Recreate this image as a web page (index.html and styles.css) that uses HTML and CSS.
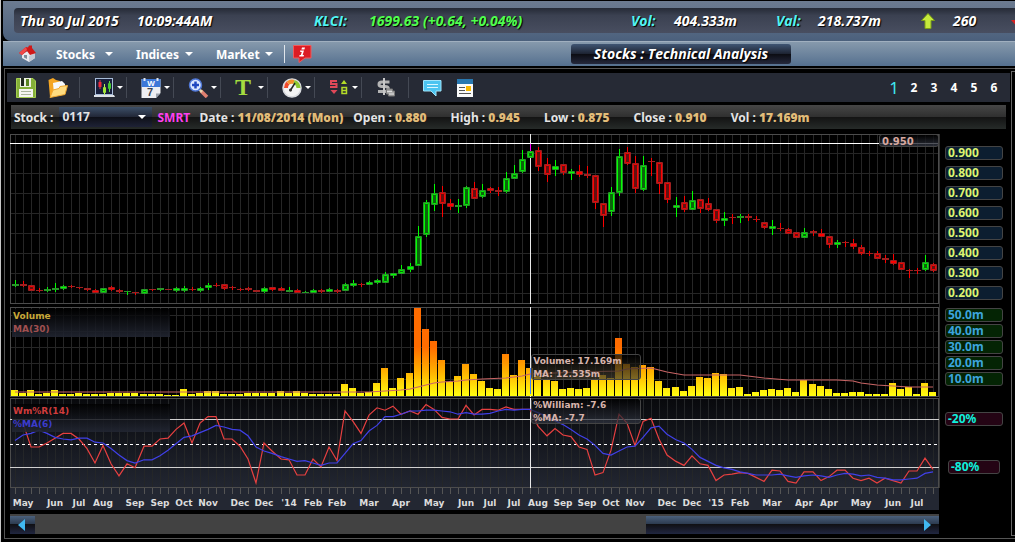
FILE: index.html
```html
<!DOCTYPE html>
<html lang="en">
<head>
    <meta charset="UTF-8">
    <meta name="viewport" content="width=device-width, initial-scale=1.0">
    <title>Stocks : Technical Analysis</title>
    <link rel="stylesheet" href="styles.css">
</head>
<body>
    <header class="ticker">
        <div class="ticker-inner">
            <span>Thu 30 Jul 2015</span>
            <span>10:09:44AM</span>
            <span class="cyan">KLCI:</span>
            <span class="green">1699.63 (+0.64, +0.04%)</span>
            <span class="cyan">Vol:</span>
            <span>404.333m</span>
            <span class="cyan">Val:</span>
            <span>218.737m</span>
            <svg width="14" height="16" viewBox="0 0 14 16"><path d="M7 0.5 L13.5 7.5 H10 V15.5 H4 V7.5 H0.5 Z" fill="#c6ea3c" stroke="#7da018"/></svg>
            <span>260</span>
            <svg width="14" height="16" viewBox="0 0 14 16"><path d="M7 15 L0 7 H4 V0 H10 V7 H14 Z" fill="#d82020"/></svg>
        </div>
    </header>

    <nav class="menu">
        <a href="#" class="home" aria-label="Home">
            <svg width="18" height="18" viewBox="0 0 18 18">
                <path d="M3 9 L9 6 L16 9 V13 L10 17 L3 13 Z" fill="#e9e9ee"/>
                <path d="M10 17 V11 L16 8 V13 Z" fill="#c3c8d2"/>
                <path d="M0 8 L7 2 L9 2.5 L10 0.5 H13 V3 L17 8 L11 10 L8 6 L3 10 Z" fill="#d01818"/>
                <path d="M7 2 L0 8 L3 10 L8 5 Z" fill="#f04a4a"/>
                <path d="M5 10 h3 v4 l-3 -1.5 Z" fill="#7f8b99"/>
            </svg>
        </a>
        <button class="menu-item caret">Stocks</button>
        <button class="menu-item caret">Indices</button>
        <button class="menu-item caret">Market</button>
        <button class="info" aria-label="Information">
            <svg width="19" height="18" viewBox="0 0 19 18">
                <path d="M0.5 0.5 H18 V13 H12 L6 17.5 V13 H0.5 Z" fill="#dc1c24" stroke="#f05a5a"/>
                <path d="M9 2.5 h3 l-.6 2 h-3 Z M7 5.5 h4 l-1.4 4.5 h1.4 l-.4 1.5 h-4.4 l.4 -1.5 h1.2 l1 -3 h-1.4 Z" fill="#fff"/>
            </svg>
        </button>
        <h1 class="title">Stocks : Technical Analysis</h1>
    </nav>

    <main class="frame">
        <div class="toolbar">
            <button class="tool tool-save" aria-label="Save">
                <svg width="20" height="20" viewBox="0 0 20 20">
                    <path d="M0.5 0.5 H17 L19.5 3 V19.5 H0.5 Z" fill="#84b038" stroke="#a4cc50"/>
                    <rect x="4" y="0" width="11" height="9" fill="#eef2e4"/>
                    <rect x="5" y="0" width="3" height="8" fill="#20281c"/>
                    <rect x="10" y="1" width="3" height="7" fill="#5a8420"/>
                    <rect x="3" y="11" width="14" height="8" fill="#f4f4f0"/>
                    <path d="M5 13.5 H15 M5 16.5 H15" stroke="#a9b49a"/>
                </svg>
            </button>
            <button class="tool tool-open" aria-label="Open">
                <svg width="21" height="20" viewBox="0 0 21 20">
                    <path d="M0.5 2 L5 0 L8 2 L12 3 V16 L2 19 Z" fill="#f5a623"/>
                    <path d="M5 5 L14 3 L17 6 V14 L6 16 Z" fill="#f7f9fb"/>
                    <path d="M2 19.5 L5 12 L11 10.5 L12 8.5 L19.5 7.5 L17 16.5 Z" fill="#ffdc80" stroke="#f0a830"/>
                </svg>
            </button>
            <button class="tool drop caret" aria-label="Chart type">
                <svg width="21" height="20" viewBox="0 0 21 20">
                    <rect x="1.5" y="0.5" width="17" height="16" fill="#18203c" stroke="#a8bcd8"/>
                    <path d="M0 17 H20 L21 19 H0 Z" fill="#dde2e8"/>
                    <path d="M6 2 V11" stroke="#e83848"/>
                    <path d="M10.5 6 V17" stroke="#b8f060"/>
                    <path d="M15.5 3 V14" stroke="#60e040"/>
                    <rect x="4.5" y="4" width="3" height="5" fill="#f02838"/>
                    <rect x="9" y="9" width="3" height="6" rx="1" fill="#a4e838"/>
                    <rect x="14" y="5" width="3" height="6" rx="1" fill="#48cc30"/>
                </svg>
            </button>
            <button class="tool drop caret" aria-label="Period">
                <svg width="20" height="20" viewBox="0 0 20 20">
                    <path d="M0.5 1 H19.5 V15 L15 20 H0.5 Z" fill="#eeeff2"/>
                    <path d="M15 20 V15.5 H19.5 Z" fill="#9ba2ac"/>
                    <path d="M0.5 1 H19.5 V9 H0.5 Z" fill="#3d78d8"/>
                    <path d="M3.5 0 V3 M16.5 0 V3" stroke="#dfe6f0" stroke-width="2"/>
                    <text x="10" y="8" text-anchor="middle" class="icon-text" font-size="8" fill="#fff">W</text>
                    <text x="9" y="18" text-anchor="middle" class="icon-text" font-size="11" fill="#3a4250">7</text>
                </svg>
            </button>
            <button class="tool drop caret" aria-label="Zoom">
                <svg width="21" height="20" viewBox="0 0 21 20">
                    <path d="M13 13 L19 19" stroke="#e08070" stroke-width="3.5"/>
                    <path d="M11 11 L14 14" stroke="#e8d8b0" stroke-width="2.5"/>
                    <circle cx="7.5" cy="7" r="6" fill="#dce8ff" stroke="#5078d8" stroke-width="1.5"/>
                    <path d="M7.5 3.5 V10.5 M4 7 H11" stroke="#2048c0" stroke-width="2.5"/>
                </svg>
            </button>
            <button class="tool drop caret text-tool" aria-label="Text">T</button>
            <button class="tool drop caret" aria-label="Indicators">
                <svg width="20" height="20" viewBox="0 0 20 20">
                    <circle cx="10" cy="10" r="9" fill="#f4f4f4" stroke="#d8dade" stroke-width="1.5"/>
                    <path d="M4 10 A6.5 6.5 0 0 1 6 5" fill="none" stroke="#f04c2c" stroke-width="4"/>
                    <path d="M6 5 A6.5 6.5 0 0 1 12 4" fill="none" stroke="#f2902c" stroke-width="4"/>
                    <path d="M12 4 A6.5 6.5 0 0 1 16.5 10" fill="none" stroke="#8cc832" stroke-width="4"/>
                    <path d="M8 13 L13 5" stroke="#222" stroke-width="1.5"/>
                    <circle cx="8.5" cy="12" r="1.5" fill="#333"/>
                </svg>
            </button>
            <button class="tool drop caret" aria-label="Sell and buy signals">
                <svg width="20" height="19" viewBox="0 0 20 19">
                    <path d="M8 3 H2 V6 H7.5 V9 H1" fill="none" stroke="#e04858" stroke-width="2"/>
                    <path d="M1.5 12 H8.5 L5 16 Z" fill="#e04858"/>
                    <path d="M12 6 H18 L15 2 Z" fill="#b4dc28"/>
                    <path d="M13 9.5 H17.5 V15.5 H13 Z M13 12.5 H17.5" fill="none" stroke="#b4dc28" stroke-width="1.5"/>
                </svg>
            </button>
            <button class="tool drop" aria-label="Price">
                <svg width="20" height="20" viewBox="0 0 20 20">
                    <path d="M13.5 4 H6 C2 4 2 8.5 6 8.5 H9 C13.5 8.5 13.5 13.5 9 13.5 H2" fill="none" stroke="#b4b4b4" stroke-width="3"/>
                    <path d="M8 0 V17" stroke="#c8c8c8" stroke-width="2"/>
                    <path d="M10.5 11 h6 v2 h2 v5 h-6 v-2 h-2 Z" fill="#a8a8a8" stroke="#777"/>
                    <path d="M11 13.5 h5 M13 16 h5" stroke="#ddd"/>
                </svg>
            </button>
            <button class="tool drop" aria-label="Comments">
                <svg width="20" height="18" viewBox="0 0 20 18">
                    <path d="M0.5 1.5 H18 V12 H13 V17 L8 12 H0.5 Z" fill="#4cc4f0" stroke="#9fe4fb"/>
                    <path d="M4 5.5 H15 M4 8.5 H15" stroke="#d8f6ff"/>
                </svg>
            </button>
            <button class="tool tool-news" aria-label="News">
                <svg width="16" height="18" viewBox="0 0 16 18">
                    <rect width="16" height="18" fill="#fafafa"/>
                    <rect width="16" height="5" fill="#2878b0"/>
                    <path d="M2 8.5 H8 M2 11.5 H8 M2 14.5 H14" stroke="#555"/>
                    <rect x="9" y="7" width="5" height="5" fill="#f8b800"/>
                </svg>
            </button>
            <div class="pages">
                <button class="page active">1</button>
                <button class="page">2</button>
                <button class="page">3</button>
                <button class="page">4</button>
                <button class="page">5</button>
                <button class="page">6</button>
            </div>
        </div>

        <div class="quote">
            <label for="stock">Stock :</label>
            <div class="stock-select caret">
                <select id="stock">
                    <option>0117</option>
                </select>
            </div>
            <span class="symbol">SMRT</span>
            <span class="field date">Date : <b>11/08/2014 (Mon)</b></span>
            <span class="field">Open : <b>0.880</b></span>
            <span class="field">High : <b>0.945</b></span>
            <span class="field">Low : <b>0.875</b></span>
            <span class="field">Close : <b>0.910</b></span>
            <span class="field">Vol : <b>17.169m</b></span>
        </div>

        <div class="chart">
            <div class="panel price-panel">
                <svg id="price" class="plot"></svg>
                <div class="price-tag">0.950</div>
            </div>
            <div class="scale price-scale">
                <span>0.900</span>
                <span>0.800</span>
                <span>0.700</span>
                <span>0.600</span>
                <span>0.500</span>
                <span>0.400</span>
                <span>0.300</span>
                <span>0.200</span>
            </div>

            <div class="panel volume-panel">
                <svg id="volume" class="plot"></svg>
                <div class="legend"><span class="yellow">Volume</span><span class="brick">MA(30)</span></div>
                <div class="tip tip-volume">Volume: 17.169m<br>MA: 12.535m</div>
            </div>
            <div class="scale volume-scale">
                <span>50.0m</span>
                <span>40.0m</span>
                <span>30.0m</span>
                <span>20.0m</span>
                <span>10.0m</span>
            </div>

            <div class="panel william-panel">
                <svg id="william" class="plot"></svg>
                <div class="legend legend-william"><span class="red">Wm%R(14)</span><span class="blue">%MA(6)</span></div>
                <div class="tip tip-william">%William: -7.6<br>%MA: -7.7</div>
            </div>
            <div class="scale william-scale">
                <span>-20%</span>
                <span class="narrow">-80%</span>
            </div>

            <svg id="months" class="months"></svg>
        </div>

        <div class="scrollbar">
            <button class="scroll-left" aria-label="Scroll left"></button>
            <button class="scroll-thumb" aria-label="Scroll right"></button>
        </div>
    </main>

    <script src="chart.js"></script>
</body>
</html>
```

FILE: styles.css
```css
* {
    box-sizing: border-box;
}
body {
    margin: 0;
    min-height: 100vh;
    padding: 1px 0 0 3px;
    background-color: #000;
    border-left: 1px solid #c8c8c8;
    color: #fff;
    font-family: "Noto Sans", sans-serif;
    font-size: 12px;
    font-weight: bold;
    overflow: hidden;
}
button {
    background: none;
    border: none;
    padding: 0;
    color: inherit;
    font: inherit;
    cursor: pointer;
}
svg {
    display: block;
}
.cyan {
    color: #4ff4f4;
}
.green {
    color: #4fff4f;
}

/* Ticker */
.ticker {
    height: 40px;
    margin-left: -1px;
    padding: 7px 0 8px 11px;
    background: linear-gradient(#6c7b90, #4b607c);
    border-bottom-left-radius: 8px;
    overflow: hidden;
}
.ticker-inner {
    display: grid;
    grid-template-columns: 117px 177px 55px 262px 43px 102px 42px 103px 32px 58px 14px;
    align-items: center;
    height: 25px;
    padding-left: 6px;
    background: linear-gradient(#252a36, #3b4151 30%, #484e60);
    border-radius: 4px 0 0 4px;
    font-family: "Open Sans", sans-serif;
    font-size: 14px;
    font-style: italic;
    line-height: 16px;
    text-shadow: 1px 1px 1px #000;
    white-space: nowrap;
}

/* Menu bar */
.menu {
    position: relative;
    display: flex;
    align-items: center;
    height: 25px;
    margin-left: -1px;
    padding-left: 16px;
    background: linear-gradient(#8699ac, #55708f);
    border-top: 1px solid #a0afbf;
    text-shadow: 1px 1px 1px #333;
}
.home {
    margin-right: 18px;
}
.menu-item {
    width: 80px;
    padding-left: 1px;
    text-align: left;
}
.caret {
    position: relative;
}
.caret::after {
    content: "";
    position: absolute;
    right: 22px;
    top: 50%;
    margin-top: -2px;
    border: 4px solid transparent;
    border-top-color: #fff;
    border-bottom: none;
}
.info {
    margin-left: -11px;
    padding-left: 8px;
    border-left: 1px solid #dfe5eb;
}
.menu .title {
    position: absolute;
    left: 568px;
    width: 220px;
    height: 20px;
    margin: 0;
    background: linear-gradient(#3f5573, #1c2230 50%, #0b0c12 50%, #24283c);
    border-radius: 3px;
    font-family: "Open Sans", sans-serif;
    font-size: 14px;
    font-style: italic;
    line-height: 20px;
    text-align: center;
    text-shadow: 1px 1px 1px #000;
    white-space: nowrap;
}

/* Main frame */
.frame {
    position: relative;
    margin-top: 2px;
    padding: 4px 5px 4px 2px;
    border: 1px solid #555;
    border-right: none;
}
/* edge of the next window */
.frame::after {
    content: "";
    position: absolute;
    top: 2px;
    right: 0;
    bottom: 2px;
    width: 3px;
    border: 1px solid #666;
    border-right: none;
}
.toolbar {
    display: flex;
    align-items: center;
    height: 29px;
    padding-left: 9px;
    background-color: #262a35;
}
.tool {
    display: flex;
    align-items: center;
    height: 21px;
}
.tool-save {
    margin-right: 12px;
}
.tool-open {
    width: 31px;
}
.tool-news {
    margin-left: 2px;
}
.drop {
    width: 47px;
    padding-left: 14px;
    border-left: 1px solid #444954;
}
.drop.caret::after {
    right: 3px;
    border-width: 3px;
    border-bottom: none;
}
.text-tool {
    color: #a4dc40;
    font-family: "Liberation Serif", serif;
    font-size: 24px;
}
.icon-text {
    font-family: "Liberation Sans", sans-serif;
}
.pages {
    display: flex;
    align-items: center;
    margin-left: auto;
    margin-right: 6px;
}
.page {
    width: 20px;
    text-align: center;
}
.page.active {
    color: #3fe8f0;
    font-size: 17px;
    font-weight: normal;
}

/* Quote row */
.quote {
    display: flex;
    align-items: center;
    height: 24px;
    margin: 3px 4px 0 4px;
    padding-left: 3px;
    background: linear-gradient(#464646, #303030 48%, #141414 52%, #262b29);
    color: #e4e4e4;
    white-space: nowrap;
}
.quote b {
    color: #e2bc78;
}
.stock-select {
    width: 93px;
    margin: 0 5px 0 6px;
}
.stock-select::after {
    right: 6px;
}
.stock-select select {
    display: block;
    width: 100%;
    height: 20px;
    padding: 0 0 2px 3px;
    appearance: none;
    background: linear-gradient(#3d5068, #222838 48%, #0e1018 52%, #1e2236);
    border: none;
    color: #e4e4e4;
    font: inherit;
}
.symbol {
    width: 42px;
    color: #ff40f0;
}
.field {
    margin-right: 24px;
}
.field.date {
    margin-right: 10px;
}

/* Chart */
.chart {
    display: grid;
    grid-template-columns: 1fr 71px;
    margin: 5px 0 0 3px;
}
.panel {
    position: relative;
}
.plot {
    width: 100%;
    height: 90px;
}
.price-panel {
    margin-bottom: 3px;
}
.price-panel .plot {
    height: 170px;
}
.volume-panel {
    margin-bottom: 1px;
}
.william-panel .plot {
    background: linear-gradient(#08090c, #222631);
}
.months {
    width: 100%;
    height: 22px;
    background-color: #232732;
}
.months text {
    fill: #dcdcdc;
    font-family: "DejaVu Sans", sans-serif;
    font-size: 9px;
    text-anchor: middle;
}
.price-tag,
.legend,
.tip {
    position: absolute;
    font-family: "DejaVu Sans", sans-serif;
    font-size: 9px;
    line-height: 13px;
}
.price-tag {
    top: 0;
    right: 0;
    width: 60px;
    height: 13px;
    padding-left: 2px;
    background: linear-gradient(rgba(0, 0, 0, 0.8), rgba(50, 54, 66, 0.8));
    border: 1px solid #444;
    border-radius: 3px;
    color: #d8a8a0;
    font-size: 10px;
}
.legend {
    display: flex;
    flex-direction: column;
    top: 2px;
    left: 2px;
    width: 158px;
    height: 28px;
    padding: 1px 0 0 1px;
    background: linear-gradient(rgba(0, 0, 0, 0.8), rgba(34, 38, 50, 0.9));
}
.legend-william {
    top: 6px;
}
.yellow {
    color: #c8a838;
}
.brick {
    color: #a05050;
}
.red {
    color: #d03c3c;
}
.blue {
    color: #3c3ccc;
}
.tip {
    left: 56.1%;
    width: 110px;
    height: 26px;
    padding-left: 1px;
    background: linear-gradient(rgba(0, 0, 0, 0.7), rgba(50, 54, 66, 0.7));
    border: 1px solid #444;
    border-radius: 3px;
    color: #d8b4ac;
    white-space: nowrap;
}
.tip-volume {
    top: 47px;
    background: linear-gradient(rgba(0, 0, 0, 0.7), rgba(70, 64, 50, 0.7));
}
.tip-william {
    top: 0;
}

/* Value scales */
.scale {
    display: flex;
    flex-direction: column;
    gap: 6px;
    padding: 12px 3px 0 5px;
    border-left: 1px solid #333;
}
.scale span {
    width: 58px;
    height: 14px;
    padding-left: 2px;
    border: 1px solid #444;
    border-radius: 3px;
    line-height: 12px;
}
.price-scale span {
    background-color: #0c1e30;
    color: #dcf470;
}
.volume-scale {
    gap: 2px;
    padding-top: 1px;
}
.volume-scale span {
    background-color: #042404;
    color: #3ca4dc;
}
.william-scale {
    gap: 34px;
    padding-top: 14px;
}
.william-scale span {
    background-color: #240414;
    color: #0ff0dc;
}
.william-scale .narrow {
    width: 52px;
    margin-left: 3px;
}

/* Scrollbar */
.scrollbar {
    display: flex;
    justify-content: space-between;
    height: 20px;
    margin: 4px 71px 0 3px;
    padding-top: 2px;
    background-color: #424242;
}
.scrollbar button {
    display: flex;
    align-items: center;
    background: linear-gradient(#4a607c, #2c3a4e 45%, #101014 46%, #202640);
}
.scroll-left {
    width: 25px;
    padding-left: 8px;
}
.scroll-left::before,
.scroll-thumb::after {
    content: "";
    border: 6px solid transparent;
}
.scroll-left::before {
    border-left: none;
    border-right: 7px solid #40b8f0;
}
.scroll-thumb {
    width: 31.5%;
    justify-content: flex-end;
    padding-right: 8px;
}
.scroll-thumb::after {
    border-right: none;
    border-left: 7px solid #40b8f0;
}
```

FILE: chart.js
```javascript
// Weekly candles: colour, high, body top, body bottom, low (in ticks of 0.005)
const candles = `
G53,49,47,46 R52,49,47,46 R48,48,42,42 R45,43,42,41 G46,44,42,41 G50,45,43,41 G48,47,44,43 R48,47,46,45
R46,46,45,44 R45,45,43,42 R44,43,40,40 G45,45,40,40 R47,46,43,42 R44,43,41,40 G42,42,41,38 R41,41,40,38
G44,44,39,39 R44,44,43,42 G45,45,43,42 R44,44,43,43 G46,45,42,41 G47,45,42,41 R46,44,43,42 G46,45,42,41
G50,48,45,43 R50,48,47,46 R49,49,44,43 R47,46,45,43 R45,44,43,42 R46,45,43,42 R43,43,41,41 G46,45,41,40
R46,46,43,42 R46,45,42,42 G46,43,41,41 R44,43,40,40 G42,41,40,40 G44,43,40,40 R44,43,41,40 G45,44,41,41
R44,43,41,40 G50,49,42,42 G53,50,47,46 R50,49,48,46 G52,51,48,48 G54,53,50,49 G61,59,50,50 G60,60,57,55
G68,64,59,59 G70,67,63,61 G107,97,67,67 G133,131,98,96 G149,140,128,122 R147,141,129,116 R134,130,126,123
G134,128,126,120 G147,146,127,125 R151,145,134,134 G149,143,136,135 R146,145,142,140 R146,143,141,137
G161,155,141,140 G168,160,154,154 G183,174,161,160 G189,182,175,175 R186,183,166,162 R175,169,158,151
G173,167,163,157 R169,169,160,158 G164,162,159,153 R168,162,158,156 R167,159,157,155 R158,158,130,124
R130,130,117,106 G146,141,121,117 G184,177,140,137 R186,181,169,168 R177,170,144,140 G177,168,143,142
R175,172,171,157 R171,171,149,139 R151,151,133,130 G136,128,125,116 R137,131,123,121 G142,133,123,123
R134,134,124,120 R135,130,123,122 R124,124,112,110 G121,115,112,107 R119,116,115,109 G119,117,115,110
R119,117,115,112 R117,114,113,111 R111,111,105,104 G113,107,104,98 R110,105,104,102 R105,104,99,99
R101,101,95,95 G105,101,95,95 R103,102,100,97 R104,100,96,96 R97,97,88,85 G93,91,88,85 R92,91,90,86
R94,90,86,84 R88,86,79,78 R82,80,79,77 R82,80,74,74 R78,75,73,70 R79,73,69,68 R71,71,63,63 R64,63,62,55
R65,63,62,59 G78,71,63,62 R70,69,62,61`.trim().split(/\s+/).map(c => ({
    up: c[0] === 'G',
    v: c.slice(1).split(',').map(Number)
}));

// Volume bars, one unit is 0.625m
const volumes = [
    6, 3, 6, 2, 3, 6, 2, 2, 3, 2, 2, 2, 3, 3, 3, 3, 2, 2, 2, 1, 1, 7, 2, 3, 5, 5, 2, 2, 2, 3, 3, 3, 3, 5, 3, 5, 3, 2, 2, 2,
    2, 12, 8, 3, 4, 13, 28, 8, 18, 23, 88, 67, 55, 36, 14, 20, 32, 22, 15, 8, 7, 42, 21, 36, 28, 20, 17, 15, 7, 8, 7, 8,
    16, 21, 18, 58, 32, 29, 31, 29, 15, 8, 9, 5, 10, 19, 18, 23, 22, 8, 9, 2, 4, 6, 7, 6, 8, 4, 16, 12, 10, 7, 3, 3, 4, 4,
    2, 2, 2, 13, 7, 9, 2, 13, 4
];

// Volume moving average: week, value
const volumeMA = [
    [0, 4], [44, 4], [46, 5], [48, 6], [49, 7], [50, 9], [51, 11], [52, 13], [53, 14], [55, 15], [56, 16], [58, 17],
    [61, 18], [63, 20], [64, 22], [70, 24], [75, 25], [76, 27], [79, 28], [80, 26], [81, 24], [83, 21], [90, 21],
    [93, 18], [96, 16], [102, 16], [104, 15], [105, 13], [107, 11], [109, 10], [111, 9], [114, 9]
];

// William %R and its average, as positive percentages
const william = [
    25, 25, 55, 55, 50, 44, 38, 38, 45, 57, 75, 53, 76, 91, 76, 81, 54, 54, 45, 44, 33, 25, 50, 25, 17, 17, 45, 45, 54,
    70, 100, 50, 60, 70, 71, 90, 90, 70, 80, 55, 72, 10, 23, 38, 15, 6, 9, 4, 14, 10, 14, 2, 8, 18, 20, 20, 3, 15, 8, 8,
    9, 5, 8, 8, 8, 29, 41, 32, 40, 42, 55, 58, 90, 87, 59, 14, 25, 53, 23, 19, 45, 65, 73, 78, 66, 76, 78, 97, 90, 89,
    87, 88, 93, 98, 84, 85, 98, 100, 86, 86, 97, 92, 84, 84, 94, 97, 94, 100, 94, 97, 100, 85, 85, 69, 83
];
const williamMA = [
    47, 40, 38, 34, 38, 43, 45, 46, 44, 44, 49, 50, 57, 65, 72, 75, 71, 71, 66, 59, 51, 43, 41, 37, 33, 28, 30, 33, 34,
    41, 55, 60, 63, 67, 70, 73, 72, 75, 78, 75, 75, 63, 51, 47, 35, 28, 17, 17, 14, 10, 10, 9, 9, 10, 11, 14, 12, 14,
    14, 13, 10, 8, 9, 8, 8, 12, 17, 22, 27, 33, 40, 45, 53, 63, 65, 60, 55, 54, 43, 31, 29, 39, 46, 50, 58, 68, 73, 78,
    81, 83, 86, 88, 90, 90, 90, 89, 91, 93, 91, 90, 91, 93, 90, 88, 89, 91, 90, 93, 94, 96, 96, 95, 94, 88, 86
];

const monthLabels = {
    1: 'May', 5: 'Jun', 8: 'Jul', 11: 'Aug', 15: 'Sep', 18: 'Sep', 21: 'Oct', 24: 'Nov', 28: 'Dec', 31: 'Dec',
    34: "'14", 37: 'Feb', 40: 'Feb', 44: 'Mar', 48: 'Apr', 52: 'May', 56: 'Jun', 59: 'Jul', 62: 'Jul', 65: 'Aug',
    68: 'Sep', 71: 'Sep', 74: 'Oct', 77: 'Nov', 81: 'Dec', 84: 'Dec', 87: "'15", 90: 'Feb', 94: 'Mar', 98: 'Apr',
    101: 'Apr', 105: 'May', 109: 'Jun', 112: 'Jul'
};
const selected = 64;

function rect(x, y, w, h, fill, extra = '') {
    return `<rect x="${x}" y="${y}" width="${w}" height="${h}" fill="${fill}" ${extra}/>`;
}

function line(points, color) {
    return `<polyline points="${points.join(' ')}" fill="none" stroke="${color}" stroke-width="1.2"/>`;
}

function draw() {
    const width = document.getElementById('price').clientWidth;
    const step = (width - 2) / candles.length;
    const xOf = i => Math.floor(1 + (i + 0.5) * step);

    function grid(height, rows, color) {
        let out = '';
        candles.forEach((c, i) => out += rect(xOf(i), 0, 1, height, color));
        rows.forEach(y => out += rect(0, y, width, 1, color));
        return out;
    }
    function border(height) {
        return `<rect x="0.5" y="0.5" width="${width - 1}" height="${height - 1}" fill="none" stroke="#4c4c4c"/>`;
    }

    // Price
    const yPrice = t => 199 - t;
    let out = grid(170, [19, 39, 59, 79, 99, 119, 139, 159], '#262626') + border(170);
    out += rect(0, 9, width, 1, '#fff') + rect(xOf(selected), 0, 1, 170, '#e8e8e8');
    candles.forEach((c, i) => {
        const x = xOf(i);
        const [high, top, bottom, low] = c.v;
        const h = top - bottom;
        const bright = c.up ? '#00ff00' : '#ff0000';
        const dark = c.up ? '#289628' : '#a02020';
        out += rect(x, yPrice(high), 1, Math.max(high - low, 1), i === selected ? '#ff00ff' : bright);
        if (h < 3) {
            out += rect(x - 3, yPrice(top), 7, h, dark);
            return;
        }
        out += rect(x - 3, yPrice(top), 7, h, dark, 'rx="1"');
        if (h < 5) {
            out += rect(x - 2, yPrice(top) + 1, 5, h - 2, bright);
        } else {
            out += `<rect x="${x - 1.5}" y="${yPrice(top) + 1.5}" width="4" height="${h - 3}" rx="1"
                fill="${c.up ? '#0c640c' : '#641010'}" stroke="${bright}"/>`;
        }
    });
    document.getElementById('price').innerHTML = out;

    // Volume
    out = '<defs><linearGradient id="bar" gradientUnits="userSpaceOnUse" x1="0" y1="89" x2="0" y2="40">' +
        '<stop offset="0" stop-color="#ffff10"/><stop offset="0.5" stop-color="#ffb000"/>' +
        '<stop offset="1" stop-color="#ff6c00"/></linearGradient></defs>';
    out += grid(90, [8, 24, 40, 56, 72], '#262626') + border(90);
    out += rect(xOf(selected), 0, 1, 90, '#e8e8e8');
    volumes.forEach((v, i) => {
        out += rect(xOf(i) - 4, 89 - v, 7, v, 'url(#bar)');
    });
    out += rect(xOf(selected), 61, 1, 26, '#4080ff');
    out += line(volumeMA.map(p => [xOf(p[0]), 89 - p[1]]), '#c86464');
    document.getElementById('volume').innerHTML = out;

    // William %R
    const yWilliam = p => 5 + p * 0.8;
    out = grid(90, [], '#242628') + border(90);
    out += rect(0, 21, width, 1, '#d0d0d0') + rect(0, 69, width, 1, '#d0d0d0');
    out += `<path d="M0 46.5 H${width}" stroke="#fff" stroke-dasharray="3 3"/>`;
    out += rect(xOf(selected), 0, 1, 90, '#e8e8e8');
    out += line(william.map((p, i) => [xOf(i), yWilliam(p)]), '#e84040');
    out += line(williamMA.map((p, i) => [xOf(i), yWilliam(p)]), '#4040e8');
    document.getElementById('william').innerHTML = out;

    // Month axis
    out = '';
    candles.forEach((c, i) => out += rect(xOf(i), 0, 1, 6, '#555'));
    for (const i in monthLabels) {
        out += `<text x="${xOf(Number(i))}" y="18">${monthLabels[i]}</text>`;
    }
    document.getElementById('months').innerHTML = out;
}

draw();
window.addEventListener('resize', draw);
```
